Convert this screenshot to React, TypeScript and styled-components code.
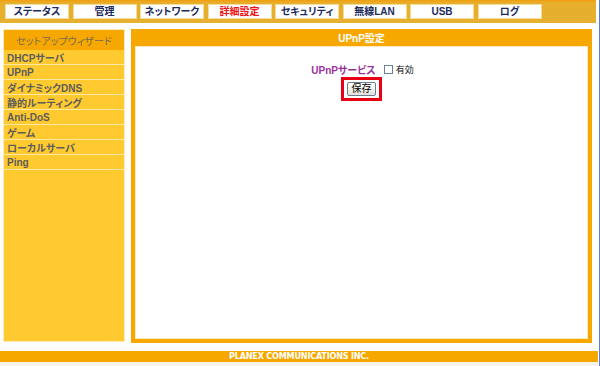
import React from "react";
import styled, { createGlobalStyle } from "styled-components";

const Global = createGlobalStyle`
  html, body { margin: 0; padding: 0; background: #ffffff; }
  body { width: 600px; height: 366px; overflow: hidden; }
  * { box-sizing: border-box; }
`;

const JP = `"Liberation Sans", "Noto Sans CJK JP", sans-serif`;

const Page = styled.div`
  width: 600px;
  height: 366px;
  border-right: 1px solid #5a7fd8;
  display: flex;
  flex-direction: column;
  font-family: ${JP};
  font-feature-settings: "palt" 1;
  white-space: nowrap;
`;

const TopBar = styled.div`
  height: 23px;
  margin-right: 3px;
  background: linear-gradient(#f0a012 0px, #f0a012 1px, #e7ae2c 2px, #e6b030 100%);
  display: flex;
  align-items: flex-start;
  padding: 4px 0 0 5px;
  gap: 3.5px;
`;

const Tab = styled.div<{ $active?: boolean }>`
  width: 64px;
  height: 15px;
  background: #ffffff;
  border: 1px solid #f6dc98;
  display: flex;
  align-items: center;
  justify-content: center;
  font-size: 10px;
  font-weight: bold;
  color: ${(p) => (p.$active ? "#ee1111" : "#1c2b5e")};
  line-height: 1;
`;

const Body = styled.div`
  display: flex;
  margin-top: 6px;
  height: 314px;
  padding-left: 3px;
  gap: 6px;
`;

const Sidebar = styled.div`
  width: 122px;
  height: 313px;
  background: #ffca30;
  border: 1px solid #ffeab8;
  display: flex;
  flex-direction: column;
`;

const SideHeader = styled.div`
  height: 20px;
  background: #f6a800;
  color: #7a6a50;
  font-size: 10px;
  display: flex;
  align-items: center;
  justify-content: center;
`;

const SideItem = styled.div`
  height: 15px;
  border-bottom: 1px solid #ffe7a4;
  color: #5c5c5c;
  font-size: 10px;
  font-weight: bold;
  display: flex;
  align-items: center;
  padding-left: 3px;
`;

const Panel = styled.div`
  width: 461px;
  height: 314px;
  background: #f6a800;
  padding: 0 4px 4px 4px;
  display: flex;
  flex-direction: column;
`;

const PanelTitle = styled.div`
  height: 17px;
  color: #ffffff;
  font-size: 10px;
  font-weight: bold;
  display: flex;
  align-items: center;
  justify-content: center;
`;

const PanelBody = styled.div`
  flex: 1;
  background: #ffffff;
  border: 1px solid #fde9c0;
  display: flex;
  flex-direction: column;
  align-items: center;
  padding-top: 16px;
`;

const ServiceRow = styled.div`
  display: flex;
  align-items: center;
  height: 13px;
  padding-left: 2px;
`;

const ServiceLabel = styled.span`
  color: #993399;
  font-size: 10px;
  font-weight: bold;
  margin-right: 8px;
`;

const Check = styled.span`
  width: 9px;
  height: 9px;
  border: 1px solid #6d7f99;
  background: #ffffff;
  margin-right: 3px;
`;

const CheckText = styled.span`
  font-size: 9px;
  color: #111;
`;

const Highlight = styled.div`
  margin-top: 1px;
  border: 3px solid #e60012;
  padding: 2px 3px;
  display: flex;
`;

const SaveButton = styled.button`
  width: 29px;
  height: 14px;
  padding: 0;
  font-family: ${JP};
  font-size: 10px;
  color: #000;
  background: linear-gradient(#ffffff, #e4e2d8);
  border: 1px solid #6a7c94;
  border-radius: 2px;
  display: flex;
  align-items: center;
  justify-content: center;
  line-height: 1;
`;

const Footer = styled.div`
  margin-top: 8px;
  height: 11px;
  margin-right: 1px;
  background: #f6a800;
  color: #ffffff;
  font-family: "DejaVu Sans Condensed", "Liberation Sans", sans-serif;
  font-size: 9px;
  font-weight: bold;
  letter-spacing: -0.2px;
  display: flex;
  align-items: center;
  justify-content: center;
  line-height: 1;
`;

const FooterStrip = styled.div`
  flex: 1;
  background: #f8f4ea;
  margin-right: 1px;
`;

const tabs = [
  "ステータス",
  "管理",
  "ネットワーク",
  "詳細設定",
  "セキュリティ",
  "無線LAN",
  "USB",
  "ログ",
];

const menu = [
  "DHCPサーバ",
  "UPnP",
  "ダイナミックDNS",
  "静的ルーティング",
  "Anti-DoS",
  "ゲーム",
  "ローカルサーバ",
  "Ping",
];

export default function App() {
  return (
    <>
      <Global />
      <Page>
        <TopBar>
          {tabs.map((t) => (
            <Tab key={t} $active={t === "詳細設定"}>
              {t}
            </Tab>
          ))}
        </TopBar>
        <Body>
          <Sidebar>
            <SideHeader>セットアップウィザード</SideHeader>
            {menu.map((m) => (
              <SideItem key={m}>{m}</SideItem>
            ))}
          </Sidebar>
          <Panel>
            <PanelTitle>UPnP設定</PanelTitle>
            <PanelBody>
              <ServiceRow>
                <ServiceLabel>UPnPサービス</ServiceLabel>
                <Check />
                <CheckText>有効</CheckText>
              </ServiceRow>
              <Highlight>
                <SaveButton>保存</SaveButton>
              </Highlight>
            </PanelBody>
          </Panel>
        </Body>
        <Footer>PLANEX COMMUNICATIONS INC.</Footer>
        <FooterStrip />
      </Page>
    </>
  );
}
